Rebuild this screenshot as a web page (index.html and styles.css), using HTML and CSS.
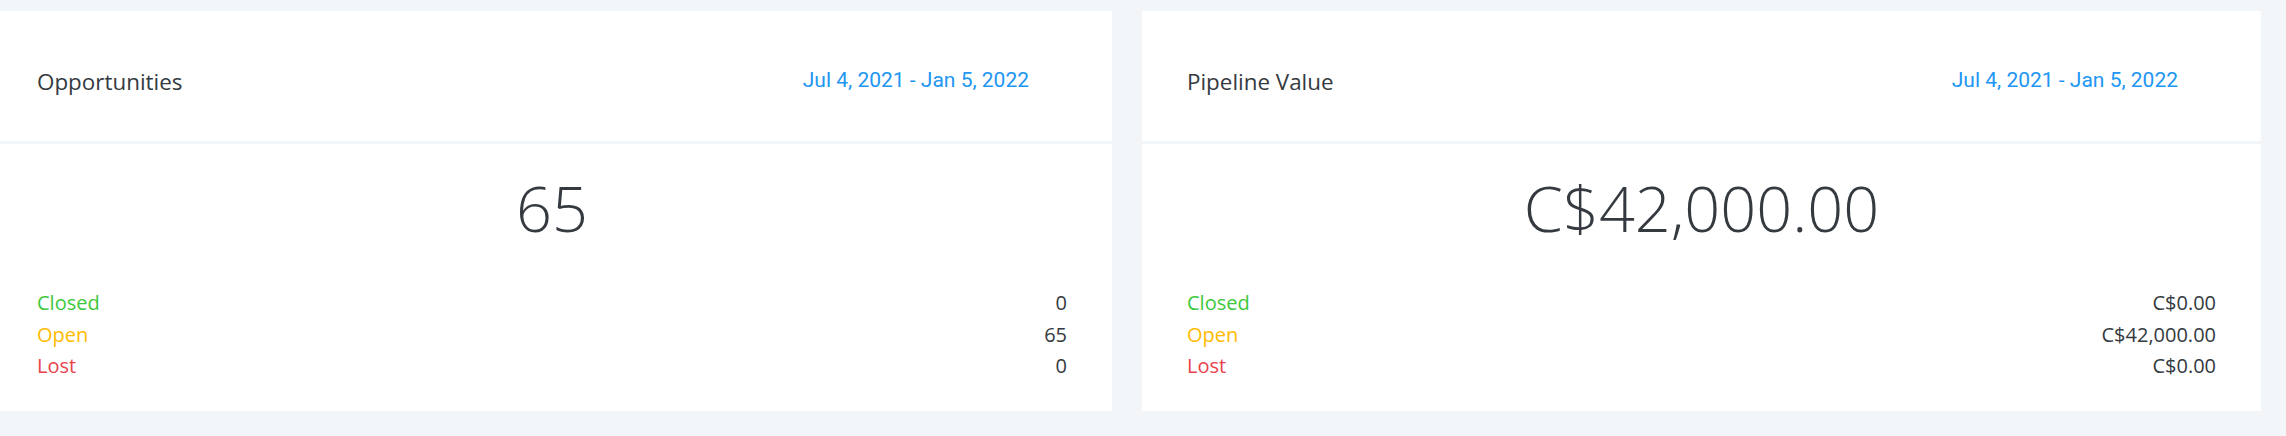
FILE: index.html
```html
<!DOCTYPE html>
<html lang="en">
<head>
<meta charset="utf-8">
<title>Dashboard</title>
<link rel="stylesheet" href="styles.css">
</head>
<body>
<div class="row">
  <section class="card">
    <header class="card-header">
      <h2 class="card-title">Opportunities</h2>
      <span class="date-range">Jul 4, 2021 - Jan 5, 2022</span>
    </header>
    <div class="card-body">
      <div class="big-number">65</div>
      <ul class="legend">
        <li><span class="label closed">Closed</span><span class="value">0</span></li>
        <li><span class="label open">Open</span><span class="value">65</span></li>
        <li><span class="label lost">Lost</span><span class="value">0</span></li>
      </ul>
    </div>
  </section>
  <section class="card">
    <header class="card-header">
      <h2 class="card-title">Pipeline Value</h2>
      <span class="date-range">Jul 4, 2021 - Jan 5, 2022</span>
    </header>
    <div class="card-body">
      <div class="big-number">C$42,000.00</div>
      <ul class="legend">
        <li><span class="label closed">Closed</span><span class="value">C$0.00</span></li>
        <li><span class="label open">Open</span><span class="value">C$42,000.00</span></li>
        <li><span class="label lost">Lost</span><span class="value">C$0.00</span></li>
      </ul>
    </div>
  </section>
</div>
</body>
</html>
```
FILE: styles.css
```css
html, body {
  margin: 0;
  padding: 0;
  background: #f2f6f9;
}
body {
  font-family: "Open Sans", "Noto Sans", sans-serif;
  color: #343a40;
  height: 436px;
  overflow: hidden;
}
.row {
  display: grid;
  grid-template-columns: 1120px 1119px;
  column-gap: 30px;
  margin: 11px 0 0 -8px;
}
.card {
  background: #fff;
  height: 400px;
  display: flex;
  flex-direction: column;
}
.card-header {
  height: 133px;
  border-bottom: 3px solid #f2f6f9;
  display: flex;
  align-items: flex-start;
  justify-content: space-between;
  padding: 56px 83px 0 45px;
  box-sizing: border-box;
}
.card-title {
  margin: 0;
  font-size: 22.4px;
  line-height: 30px;
  font-weight: 400;
  color: #343a40;
}
.date-range {
  font-family: Roboto, "Open Sans", sans-serif;
  font-size: 21px;
  line-height: 30px;
  margin-top: -2px;
  color: #2196f3;
}
.card-body {
  padding: 0 45px;
}
.big-number {
  text-align: center;
  font-size: 63px;
  font-weight: 300;
  line-height: 64px;
  margin-top: 32px;
  color: #343a40;
}
.legend {
  list-style: none;
  margin: 47px 0 0 0;
  padding: 0;
  font-size: 20px;
}
.legend li {
  display: flex;
  justify-content: space-between;
  line-height: 31.5px;
}
.closed { color: #3cc83c; }
.open { color: #ffbb00; }
.lost { color: #e8434b; }
.value { color: #343a40; }
```
